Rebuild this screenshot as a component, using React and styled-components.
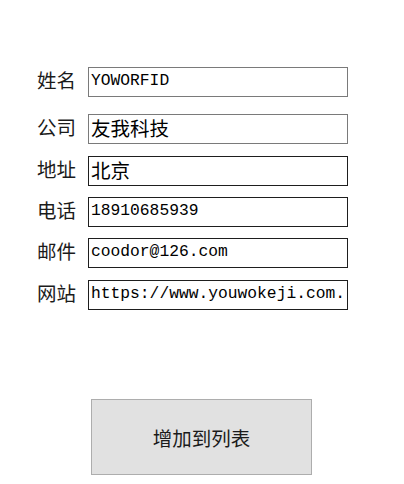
import React from "react";
import styled, { createGlobalStyle } from "styled-components";

const Global = createGlobalStyle`
  html, body { margin: 0; padding: 0; background: #ffffff; }
  body { font-family: "Noto Sans CJK SC", "Liberation Sans", sans-serif; }
`;

const Page = styled.div`
  width: 404px;
  height: 484px;
  display: flex;
  flex-direction: column;
  padding-top: 67px;
  box-sizing: border-box;
`;

const Form = styled.div`
  display: flex;
  flex-direction: column;
  padding-left: 37px;
`;

const Row = styled.div`
  display: grid;
  grid-template-columns: 51px 260px;
  align-items: center;
  margin-top: ${(p) => p.$mt || 0}px;
`;

const Label = styled.span`
  font-family: "Noto Sans CJK SC", sans-serif;
  font-size: 19.5px;
  line-height: 22px;
  color: #1b1b1b;
  margin-bottom: 4px;
  white-space: nowrap;
`;

const Field = styled.input`
  box-sizing: border-box;
  width: 260px;
  height: 30px;
  margin: 0;
  padding: 0 0 3px 2px;
  border: 1px solid ${(p) => (p.$dim ? "#7a7a7a" : "#1e1e1e")};
  border-radius: 0;
  outline: none;
  background: #ffffff;
  color: #000000;
  font-family: "Liberation Mono", "Noto Sans CJK SC", monospace;
  font-size: ${(p) => (p.$cjk ? "19.5px" : "16.3px")};
  overflow: hidden;
`;

const ButtonRow = styled.div`
  display: flex;
  padding-left: 91px;
  margin-top: 89px;
`;

const Button = styled.button`
  box-sizing: border-box;
  width: 221px;
  height: 76px;
  margin: 0;
  background: #e1e1e1;
  border: 1px solid #adadad;
  border-radius: 0;
  font-family: "Noto Sans CJK SC", sans-serif;
  font-size: 19.5px;
  color: #1b1b1b;
  padding: 0;
  cursor: pointer;
`;

const rows = [
  { label: "姓名", value: "YOWORFID", mt: 0, dim: true },
  { label: "公司", value: "友我科技", mt: 17, dim: true, cjk: true },
  { label: "地址", value: "北京", mt: 12, cjk: true },
  { label: "电话", value: "18910685939", mt: 11 },
  { label: "邮件", value: "coodor@126.com", mt: 11 },
  { label: "网站", value: "https://www.youwokeji.com.", mt: 12 },
];

export default function App() {
  return (
    <>
      <Global />
      <Page>
        <Form>
          {rows.map((r) => (
            <Row key={r.label} $mt={r.mt}>
              <Label>{r.label}</Label>
              <Field defaultValue={r.value} $dim={r.dim} $cjk={r.cjk} readOnly />
            </Row>
          ))}
        </Form>
        <ButtonRow>
          <Button>增加到列表</Button>
        </ButtonRow>
      </Page>
    </>
  );
}
